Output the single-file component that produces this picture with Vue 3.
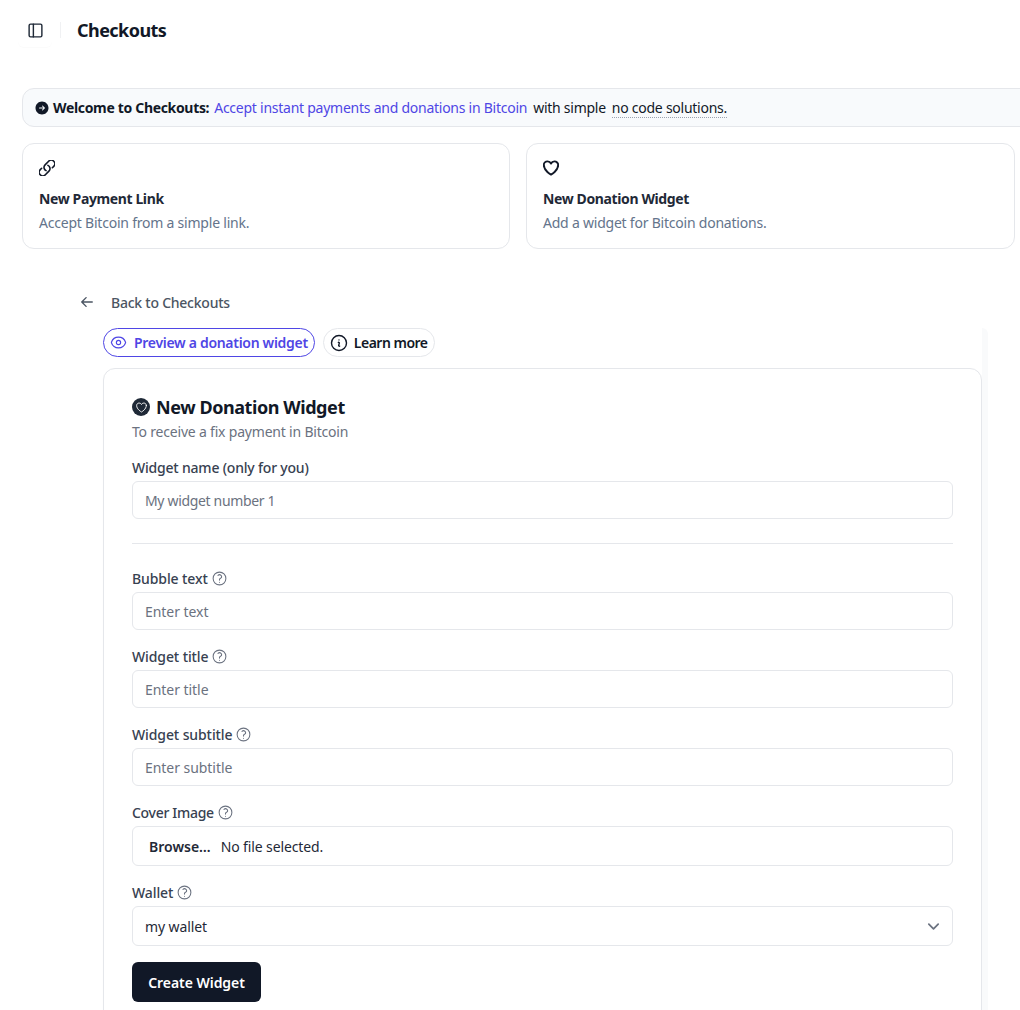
<script setup>
const fields = [
  { label: 'Bubble text', placeholder: 'Enter text' },
  { label: 'Widget title', placeholder: 'Enter title' },
  { label: 'Widget subtitle', placeholder: 'Enter subtitle' },
]
const q = 'M9.879 7.519c1.171-1.025 3.071-1.025 4.242 0 1.172 1.025 1.172 2.687 0 3.712-.203.179-.43.326-.67.442-.745.361-1.45.999-1.45 1.827v.75M21 12a9 9 0 1 1-18 0 9 9 0 0 1 18 0Zm-9 5.25h.008v.008H12v-.008Z'
const heart = 'M21 8.25c0-2.485-2.099-4.5-4.688-4.5-1.935 0-3.597 1.126-4.312 2.733-.715-1.607-2.377-2.733-4.313-2.733C5.1 3.75 3 5.765 3 8.25c0 7.22 9 12 9 12s9-4.78 9-12Z'
</script>

<template>
  <div class="page">
    <header class="top">
      <button class="side-btn" aria-label="Toggle sidebar">
        <svg width="17" height="17" viewBox="0 0 24 24" fill="none" stroke="currentColor" stroke-width="2" stroke-linecap="round" stroke-linejoin="round"><rect x="3" y="3" width="18" height="18" rx="2"/><path d="M9 3v18"/></svg>
      </button>
      <span class="vr"></span>
      <h1>Checkouts</h1>
    </header>

    <div class="banner">
      <svg class="go" width="16" height="16" viewBox="0 0 24 24" fill="currentColor"><path fill-rule="evenodd" d="M12 2.25c-5.385 0-9.75 4.365-9.75 9.75s4.365 9.75 9.75 9.75 9.75-4.365 9.75-9.75S17.385 2.25 12 2.25Zm4.28 10.28a.75.75 0 0 0 0-1.06l-3-3a.75.75 0 1 0-1.06 1.06l1.72 1.72H8.25a.75.75 0 0 0 0 1.5h5.69l-1.72 1.72a.75.75 0 1 0 1.06 1.06l3-3Z"/></svg>
      <strong>Welcome to Checkouts:</strong>
      <a>Accept instant payments and donations in Bitcoin</a>
      <span class="simple">with simple</span>
      <span class="dotted">no code solutions.</span>
    </div>

    <div class="cards">
      <div class="card">
        <svg width="16" height="16" viewBox="2 2 20 20" fill="none" stroke="#111827" stroke-width="2" stroke-linecap="round" stroke-linejoin="round"><path d="M13.19 8.688a4.5 4.5 0 0 1 1.242 7.244l-4.5 4.5a4.5 4.5 0 0 1-6.364-6.364l1.757-1.757m13.35-.622 1.757-1.757a4.5 4.5 0 0 0-6.364-6.364l-4.5 4.5a4.5 4.5 0 0 0 1.242 7.244"/></svg>
        <h3>New Payment Link</h3>
        <p>Accept Bitcoin from a simple link.</p>
      </div>
      <div class="card">
        <svg width="16" height="16" viewBox="2 2 20 20" fill="none" stroke="#111827" stroke-width="2.4" stroke-linecap="round" stroke-linejoin="round"><path :d="heart"/></svg>
        <h3>New Donation Widget</h3>
        <p>Add a widget for Bitcoin donations.</p>
      </div>
    </div>

    <div class="back">
      <svg width="14" height="14" viewBox="0 0 24 24" fill="none" stroke="currentColor" stroke-width="2.4" stroke-linecap="round" stroke-linejoin="round"><path d="M10.5 19.5 3 12m0 0 7.5-7.5M3 12h18"/></svg>
      <span>Back to Checkouts</span>
    </div>

    <div class="panel">
      <div class="col">
        <div class="pills">
          <button class="pill violet">
            <svg width="17" height="17" viewBox="0 0 24 24" fill="none" stroke="currentColor" stroke-width="1.6" stroke-linecap="round" stroke-linejoin="round"><path d="M2.036 12.322a1.012 1.012 0 0 1 0-.639C3.423 7.51 7.36 4.5 12 4.5c4.638 0 8.573 3.007 9.963 7.178.07.207.07.431 0 .639C20.577 16.49 16.64 19.5 12 19.5c-4.638 0-8.573-3.007-9.963-7.178Z"/><path d="M15 12a3 3 0 1 1-6 0 3 3 0 0 1 6 0Z"/></svg>
            Preview a donation widget
          </button>
          <button class="pill plain">
            <svg width="20" height="20" viewBox="0 0 24 24" fill="none" stroke="currentColor" stroke-width="1.7" stroke-linecap="round" stroke-linejoin="round"><path d="m11.25 11.25.041-.02a.75.75 0 0 1 1.063.852l-.708 2.836a.75.75 0 0 0 1.063.853l.041-.021M21 12a9 9 0 1 1-18 0 9 9 0 0 1 18 0Zm-9-3.75h.008v.008H12V8.25Z"/></svg>
            Learn more
          </button>
        </div>

        <form class="form" @submit.prevent>
          <div class="head">
            <span class="badge">
              <svg width="13" height="13" viewBox="0 0 24 24" fill="none" stroke="#fff" stroke-width="1.7" stroke-linecap="round" stroke-linejoin="round"><path :d="heart"/></svg>
            </span>
            <h2>New Donation Widget</h2>
          </div>
          <p class="sub">To receive a fix payment in Bitcoin</p>

          <label class="lab first">Widget name (only for you)</label>
          <input class="inp first-inp" placeholder="My widget number 1" />

          <hr />

          <template v-for="f in fields" :key="f.label">
            <label class="lab">{{ f.label }}
              <svg width="17" height="17" viewBox="0 0 24 24" fill="none" stroke="#6b7280" stroke-width="1.5" stroke-linecap="round" stroke-linejoin="round"><path :d="q"/></svg>
            </label>
            <input class="inp" :placeholder="f.placeholder" />
          </template>

          <label class="lab cover">Cover Image
            <svg width="17" height="17" viewBox="0 0 24 24" fill="none" stroke="#6b7280" stroke-width="1.5" stroke-linecap="round" stroke-linejoin="round"><path :d="q"/></svg>
          </label>
          <div class="file"><b>Browse…</b><span>No file selected.</span></div>

          <label class="lab">Wallet
            <svg width="17" height="17" viewBox="0 0 24 24" fill="none" stroke="#6b7280" stroke-width="1.5" stroke-linecap="round" stroke-linejoin="round"><path :d="q"/></svg>
          </label>
          <div class="select">
            <span>my wallet</span>
            <svg width="15" height="15" viewBox="0 0 24 24" fill="none" stroke="#6b7280" stroke-width="2.8" stroke-linecap="round" stroke-linejoin="round"><path d="m19.5 8.25-7.5 7.5-7.5-7.5"/></svg>
          </div>

          <button class="submit">Create Widget</button>
        </form>
      </div>
      <div class="strip"></div>
    </div>
  </div>
</template>

<style>
html, body { margin: 0; height: 100%; overflow: hidden; background: #fff; }
</style>

<style scoped>
.page {
  height: 1010px;
  overflow: hidden;
  font-family: "Noto Sans", sans-serif;
  font-size: 14px;
  color: #111827;
  box-sizing: border-box;
}
.top {
  display: flex;
  align-items: center;
  height: 60px;
  padding-left: 18px;
}
.side-btn {
  width: 34px;
  height: 34px;
  padding: 0;
  border: 0;
  background: transparent;
  color: #1f2937;
  display: flex;
  align-items: center;
  justify-content: center;
  border-radius: 6px;
  box-shadow: 0 1px 1px rgba(17, 24, 39, 0.02);
}
.vr { width: 1px; height: 16px; background: #f0f1f3; margin-left: 8px; margin-right: 16px; }
h1 { margin: 0; font-size: 18px; font-weight: 700; color: #111827; line-height: 28px; letter-spacing: -0.55px; }
.banner {
  display: flex;
  align-items: center;
  gap: 5px;
  height: 39px;
  box-sizing: border-box;
  margin: 28px -30px 0 22px;
  padding-left: 11px;
  border: 1px solid #e5e7eb;
  border-radius: 12px;
  background: #f8fafc;
  white-space: nowrap;
}
.go { color: #111827; flex: none; margin-right: -2px; }
.banner strong { font-weight: 700; letter-spacing: -0.33px; }
.banner a { color: #4f46e5; letter-spacing: -0.25px; }
.simple { margin-left: 1px; letter-spacing: -0.27px; }
.dotted { margin-left: 1px; margin-top: 2px; border-bottom: 1px dotted #9ca3af; line-height: 18px; letter-spacing: -0.25px; }
.cards {
  display: grid;
  grid-template-columns: 488px 489px;
  gap: 16px;
  margin: 16px 0 0 22px;
}
.card {
  box-sizing: border-box;
  height: 106px;
  padding: 16px;
  border: 1px solid #e5e7eb;
  border-radius: 12px;
  background: #fff;
}
.card svg { display: block; }
.card h3 { margin: 13px 0 0; font-size: 14px; font-weight: 700; line-height: 20px; color: #1f2937; letter-spacing: -0.38px; }
.card p { margin: 4px 0 0; font-size: 14px; line-height: 20px; color: #64748b; letter-spacing: -0.22px; }
.back {
  display: flex;
  align-items: center;
  gap: 17px;
  margin: 43px 0 0 80px;
  height: 20px;
  color: #4b5563;
  font-weight: 500;
  letter-spacing: -0.24px;
}
.panel {
  display: flex;
  width: 885px;
  margin: 16px 0 0 103px;
}
.col { width: 879px; flex: none; }
.strip { width: 6px; background: #f9fafb; border-top-right-radius: 8px; margin-bottom: -200px; }
.pills { display: flex; gap: 8px; height: 29px; }
.pill {
  display: inline-flex;
  align-items: center;
  height: 29px;
  box-sizing: border-box;
  background: #fff;
  border-radius: 15px;
  font: inherit;
  font-weight: 600;
  white-space: nowrap;
}
.violet { gap: 7px; border: 1px solid #4f46e5; color: #4f46e5; padding: 0 6px; letter-spacing: -0.3px; }
.plain { gap: 5px; border: 1px solid #e5e7eb; color: #111827; padding: 0 6px 0 5px; letter-spacing: -0.5px; }
.form {
  margin-top: 11px;
  box-sizing: border-box;
  height: 800px;
  padding: 27px 28px 0;
  border: 1px solid #e5e7eb;
  border-radius: 12px;
  background: #fff;
  box-shadow: 0 1px 2px rgba(0, 0, 0, 0.02);
}
.head { display: flex; align-items: center; gap: 6px; height: 22px; }
.badge {
  width: 18px;
  height: 18px;
  border-radius: 50%;
  background: #1f2937;
  display: flex;
  align-items: center;
  justify-content: center;
}
h2 { margin: 0; font-size: 18px; line-height: 22px; font-weight: 700; color: #111827; letter-spacing: -0.43px; }
.sub { margin: 4px 0 0; line-height: 20px; color: #6b7280; letter-spacing: -0.2px; }
.lab {
  display: flex;
  align-items: center;
  gap: 3px;
  height: 20px;
  margin: 16px 0 4px;
  font-weight: 500;
  color: #374151;
  letter-spacing: -0.1px;
}
.lab.first { margin-top: 15px; letter-spacing: -0.2px; }
.lab.cover { letter-spacing: -0.3px; }
.inp {
  display: block;
  width: 100%;
  box-sizing: border-box;
  height: 38px;
  padding: 0 12px;
  border: 1px solid #e5e7eb;
  border-radius: 6px;
  font: inherit;
  letter-spacing: -0.05px;
  color: #111827;
  background: #fff;
  outline: none;
}
.first-inp { letter-spacing: -0.33px; }
.inp::placeholder { color: #6b7280; opacity: 1; }
hr { border: 0; border-top: 1px solid #e5e7eb; margin: 24px 0; }
hr + .lab { margin-top: 0; }
.file {
  display: flex;
  align-items: center;
  gap: 10px;
  height: 40px;
  box-sizing: border-box;
  padding-left: 16px;
  border: 1px solid #e5e7eb;
  border-radius: 6px;
  color: #1f2937;
}
.file b { font-weight: 600; }
.file span { letter-spacing: -0.12px; }
.select {
  display: flex;
  align-items: center;
  justify-content: space-between;
  height: 40px;
  box-sizing: border-box;
  padding: 0 11px 0 12px;
  border: 1px solid #e5e7eb;
  border-radius: 6px;
  color: #1f2937;
  letter-spacing: -0.1px;
}
.submit {
  display: block;
  margin-top: 16px;
  width: 129px;
  height: 40px;
  border: 0;
  border-radius: 6px;
  background: #111827;
  color: #fff;
  font: inherit;
  font-weight: 600;
  letter-spacing: -0.05px;
}
</style>
